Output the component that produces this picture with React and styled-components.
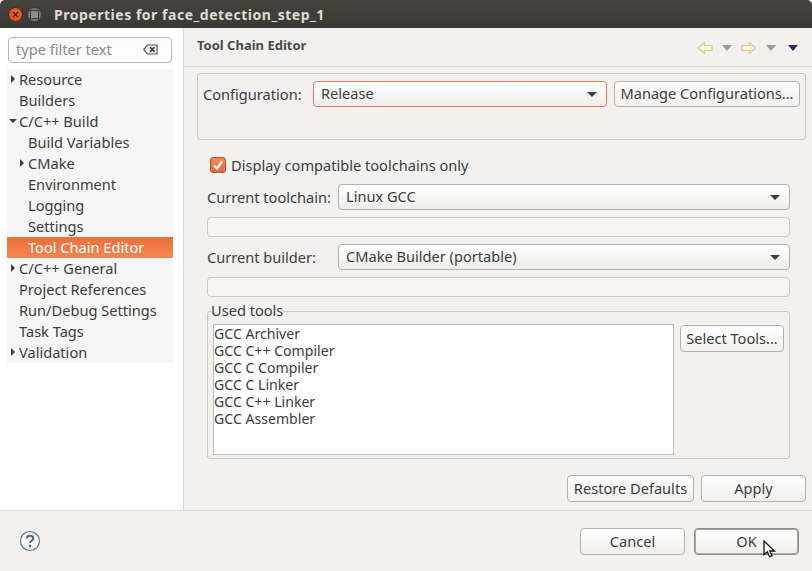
import React from 'react';
import styled, { createGlobalStyle } from 'styled-components';

const GlobalStyle = createGlobalStyle`
  html, body { margin: 0; padding: 0; height: 100%; background: #f2f1f0; }
  * { box-sizing: border-box; }
  body {
    font-family: "Noto Sans", "Open Sans", sans-serif;
    font-size: 14.6px;
    color: #3c3c3c;
    overflow: hidden;
  }
`;

const Window = styled.div`
  width: 812px;
  height: 571px;
  display: flex;
  flex-direction: column;
`;

const TitleBar = styled.div`
  height: 28px;
  flex: none;
  display: flex;
  align-items: center;
  padding-left: 8px;
  background: linear-gradient(#45433e, #3a3934);
  border-radius: 5px 5px 0 0;
`;

const CloseDot = styled.div`
  width: 15px;
  height: 15px;
  border-radius: 50%;
  background: radial-gradient(circle at 50% 40%, #f0653a, #d4421c);
  border: 1px solid #35332e;
  display: flex;
  align-items: center;
  justify-content: center;
`;

const MaxDot = styled.div`
  width: 15px;
  height: 15px;
  margin-left: 4px;
  border-radius: 50%;
  background: #7b7a74;
  border: 1px solid #35332e;
  display: flex;
  align-items: center;
  justify-content: center;
  &::after {
    content: '';
    width: 7px;
    height: 7px;
    border: 1px solid #3c3b37;
    background: #8e8d87;
  }
`;

const Title = styled.div`
  margin-left: 12px;
  font-size: 14px;
  font-weight: 700;
  letter-spacing: 0.52px;
  color: #dfdbd2;
`;

const Body = styled.div`
  flex: 1;
  display: flex;
  min-height: 0;
`;

const Sidebar = styled.div`
  width: 184px;
  flex: none;
  background: #fff;
  border-right: 1px solid #d9d8d6;
  padding: 9px 10px 0 7px;
`;

const Filter = styled.div`
  width: 164px;
  height: 26px;
  margin-left: 1px;
  display: flex;
  align-items: center;
  justify-content: space-between;
  padding: 0 13px 2px 7px;
  border: 1px solid #b9b7b3;
  border-radius: 4px;
  color: #8a8a8a;
  background: linear-gradient(#fafafa, #fff);
`;

const Tree = styled.div`
  margin-top: 6px;
  width: 166px;
  background: #f6f6f6;
`;

const TreeRow = styled.div`
  height: 21px;
  display: flex;
  align-items: center;
  position: relative;
  white-space: nowrap;
  padding-bottom: 2px;
  padding-left: ${p => (p.$child ? 21 : 12)}px;
  color: ${p => (p.$selected ? '#fff' : '#3c3c3c')};
  background: ${p => (p.$selected ? 'linear-gradient(#ec6f3e, #f58650)' : 'transparent')};
`;

const Twist = styled.span`
  position: absolute;
  left: ${p => (p.$open ? 2 : p.$child ? 13 : 4)}px;
  top: 6px;
  width: 0;
  height: 0;
  ${p => (p.$open
    ? 'margin-top: 2px; border-left: 4px solid transparent; border-right: 4px solid transparent; border-top: 4px solid #3c3c3c;'
    : 'border-top: 4px solid transparent; border-bottom: 4px solid transparent; border-left: 4px solid #3c3c3c;')}
`;

const Main = styled.div`
  flex: 1;
  min-width: 0;
  display: flex;
  flex-direction: column;
`;

const PageHeader = styled.div`
  height: 39px;
  flex: none;
  display: flex;
  align-items: center;
  justify-content: space-between;
  padding: 0 14px 4px 13px;
  border-bottom: 1px solid #dddcda;
`;

const PageTitle = styled.div`
  font-size: 13px;
  font-weight: 700;
  color: #4a4a4a;
`;

const HeaderIcons = styled.div`
  display: flex;
  align-items: center;
  margin-top: 6px;
`;

const Content = styled.div`
  flex: 1;
  padding: 6px 6px 6px 13px;
  display: flex;
  flex-direction: column;
`;

const ConfigBox = styled.div`
  height: 67px;
  flex: none;
  border: 1px solid #c8c7c4;
  border-radius: 3px;
  padding: 7px 6px 0 5px;
  display: flex;
  align-items: flex-start;
`;

const ConfigLabel = styled.div`
  width: 110px;
  line-height: 26px;
  flex: none;
`;

const Combo = styled.div`
  height: 26px;
  flex: ${p => (p.$fill ? 1 : 'none')};
  width: ${p => p.$width || 'auto'};
  display: flex;
  align-items: center;
  justify-content: space-between;
  padding: 0 9px 2px 7px;
  border: 1px solid ${p => (p.$focused ? '#e07a55' : '#b3b1ad')};
  border-radius: 4px;
  background: linear-gradient(#fff, #eeedeb);
`;

const ComboArrow = styled.span`
  width: 0;
  height: 0;
  margin-top: 2px;
  border-left: 5px solid transparent;
  border-right: 5px solid transparent;
  border-top: 5px solid #3c3c3c;
`;

const Button = styled.div`
  height: 27px;
  width: ${p => p.$width}px;
  flex: none;
  display: flex;
  align-items: center;
  justify-content: center;
  position: relative;
  white-space: nowrap;
  padding-bottom: 1px;
  border: 1px solid ${p => (p.$default ? '#8f8d89' : '#b3b1ad')};
  border-radius: 4px;
  background: linear-gradient(#fff, #f1f0ee);
  box-shadow: ${p => (p.$default ? 'inset 0 0 0 1px #a9a7a3' : 'none')};
`;

const ManageButton = styled(Button)`
  margin-left: 7px;
  height: 26px;
  padding-bottom: 3px;
`;

const CheckRow = styled.div`
  display: flex;
  align-items: center;
  margin: 16px 0 0 13px;
  height: 18px;
`;

const CheckBox = styled.div`
  width: 16px;
  height: 16px;
  margin-right: 5px;
  border-radius: 3px;
  border: 1px solid #b8522c;
  background: linear-gradient(#f08a5d, #e2693a);
  display: flex;
  align-items: center;
  justify-content: center;
`;

const FieldRow = styled.div`
  display: flex;
  align-items: center;
  margin-top: ${p => p.$top}px;
  padding-left: 10px;
  padding-right: 16px;
`;

const FieldLabel = styled.div`
  width: 131px;
  flex: none;
`;

const EmptyField = styled.div`
  height: 20px;
  margin: 7px 16px 0 10px;
  border: 1px solid #c9c8c5;
  border-radius: 4px;
  background: #f5f4f3;
`;

const ToolsGroup = styled.fieldset`
  margin: 6px 16px 0 10px;
  height: 156px;
  min-width: 0;
  border: 1px solid #c8c7c4;
  border-radius: 3px;
  padding: 5px 5px 0 5px;
  display: flex;
  align-items: flex-start;
`;

const ToolsLegend = styled.legend`
  padding: 0;
  margin-left: -2px;
  height: 16px;
  line-height: 14px;
`;

const ToolsList = styled.div`
  width: 461px;
  height: 131px;
  flex: none;
  background: #fff;
  border: 1px solid #bdbcb9;
`;

const ToolItem = styled.div`
  height: 17px;
  font-size: 14.1px;
  line-height: 17px;
  white-space: nowrap;
`;

const SelectButton = styled(Button)`
  margin: 1px 0 0 6px;
`;

const ActionRow = styled.div`
  display: flex;
  justify-content: flex-end;
  gap: 7px;
  margin-top: 16px;
`;

const Footer = styled.div`
  height: 61px;
  flex: none;
  display: flex;
  align-items: center;
  border-top: 1px solid #dddcda;
  padding: 0 13px 0 19px;
`;

const FooterButtons = styled.div`
  margin-left: auto;
  display: flex;
  gap: 9px;
`;

const Cursor = styled.svg`
  position: absolute;
  left: 68px;
  top: 11px;
`;

const treeItems = [
  { label: 'Resource', twist: 'closed' },
  { label: 'Builders' },
  { label: 'C/C++ Build', twist: 'open' },
  { label: 'Build Variables', child: true },
  { label: 'CMake', child: true, twist: 'closed' },
  { label: 'Environment', child: true },
  { label: 'Logging', child: true },
  { label: 'Settings', child: true },
  { label: 'Tool Chain Editor', child: true, selected: true },
  { label: 'C/C++ General', twist: 'closed' },
  { label: 'Project References' },
  { label: 'Run/Debug Settings' },
  { label: 'Task Tags' },
  { label: 'Validation', twist: 'closed' },
];

const tools = ['GCC Archiver', 'GCC C++ Compiler', 'GCC C Compiler', 'GCC C Linker', 'GCC C++ Linker', 'GCC Assembler'];

function ArrowIcon({ flip }) {
  return (
    <svg width="16" height="14" viewBox="0 0 16 14" style={flip ? { transform: 'scaleX(-1)' } : undefined}>
      <path d="M0.5 7 L6.5 1.5 V4.5 H14 V9.5 H6.5 V12.5 Z" fill="#fdf6e3" stroke="#e2c48c" strokeWidth="1.2" strokeLinejoin="round" />
    </svg>
  );
}

function SmallTriangle({ color, left }) {
  return (
    <svg width="10" height="6" viewBox="0 0 10 6" style={{ marginLeft: left }}>
      <path d="M0 0 H10 L5 6 Z" fill={color} />
    </svg>
  );
}

export default function App() {
  return (
    <Window>
      <GlobalStyle />
      <TitleBar>
        <CloseDot>
          <svg width="7" height="7" viewBox="0 0 7 7">
            <path d="M1 1 L6 6 M6 1 L1 6" stroke="#4a1d0c" strokeWidth="1.3" />
          </svg>
        </CloseDot>
        <MaxDot />
        <Title>Properties for face_detection_step_1</Title>
      </TitleBar>
      <Body>
        <Sidebar>
          <Filter>
            <span>type filter text</span>
            <svg width="15" height="11" viewBox="0 0 15 11">
              <path d="M0.7 5.5 L4.5 1 H14 V10 H4.5 Z" fill="#f4f4f4" stroke="#555" strokeWidth="1.2" />
              <path d="M7 3.2 L11.5 7.8 M11.5 3.2 L7 7.8" stroke="#444" strokeWidth="1.8" />
            </svg>
          </Filter>
          <Tree>
            {treeItems.map(item => (
              <TreeRow key={item.label} $child={item.child} $selected={item.selected}>
                {item.twist && <Twist $child={item.child} $open={item.twist === 'open'} />}
                {item.label}
              </TreeRow>
            ))}
          </Tree>
        </Sidebar>
        <Main>
          <PageHeader>
            <PageTitle>Tool Chain Editor</PageTitle>
            <HeaderIcons>
              <ArrowIcon />
              <SmallTriangle color="#9a9a98" left="8px" />
              <span style={{ width: 8 }} />
              <ArrowIcon flip />
              <SmallTriangle color="#9a9a98" left="10px" />
              <SmallTriangle color="#3a1f6e" left="12px" />
            </HeaderIcons>
          </PageHeader>
          <Content>
            <ConfigBox>
              <ConfigLabel>Configuration:</ConfigLabel>
              <Combo $focused $width="294px">
                Release
                <ComboArrow />
              </Combo>
              <ManageButton $width={186}>Manage Configurations...</ManageButton>
            </ConfigBox>
            <CheckRow>
              <CheckBox>
                <svg width="12" height="12" viewBox="0 0 12 12">
                  <path d="M2 6.5 L5 9.5 L10 2.5" fill="none" stroke="#fff" strokeWidth="2.2" />
                </svg>
              </CheckBox>
              Display compatible toolchains only
            </CheckRow>
            <FieldRow $top={10}>
              <FieldLabel>Current toolchain:</FieldLabel>
              <Combo $fill>
                Linux GCC
                <ComboArrow />
              </Combo>
            </FieldRow>
            <EmptyField />
            <FieldRow $top={7}>
              <FieldLabel>Current builder:</FieldLabel>
              <Combo $fill>
                CMake Builder (portable)
                <ComboArrow />
              </Combo>
            </FieldRow>
            <EmptyField />
            <ToolsGroup>
              <ToolsLegend>Used tools</ToolsLegend>
              <ToolsList>
                {tools.map(tool => <ToolItem key={tool}>{tool}</ToolItem>)}
              </ToolsList>
              <SelectButton $width={104}>Select Tools...</SelectButton>
            </ToolsGroup>
            <ActionRow>
              <Button $width={127}>Restore Defaults</Button>
              <Button $width={105}>Apply</Button>
            </ActionRow>
          </Content>
        </Main>
      </Body>
      <Footer>
        <svg width="22" height="22" viewBox="0 0 22 22">
          <circle cx="11" cy="11" r="9.5" fill="#f6f6f6" stroke="#5f7595" strokeWidth="1.2" />
          <path d="M7.8 8.2 C8 4.8 14.2 4.8 14.2 8.4 C14.2 10.8 11 10.6 11 13" fill="none" stroke="#4d6489" strokeWidth="2" />
          <circle cx="11" cy="16" r="1.3" fill="#4d6489" />
        </svg>
        <FooterButtons>
          <Button $width={105}>Cancel</Button>
          <Button $width={105} $default>
            OK
            <Cursor width="14" height="18" viewBox="0 0 14 18">
              <path d="M1 1 V14.5 L4.3 11.8 L6.6 16.8 L9 15.6 L6.8 11 H11.5 Z" fill="#fff" stroke="#111" strokeWidth="1.3" />
            </Cursor>
          </Button>
        </FooterButtons>
      </Footer>
    </Window>
  );
}
